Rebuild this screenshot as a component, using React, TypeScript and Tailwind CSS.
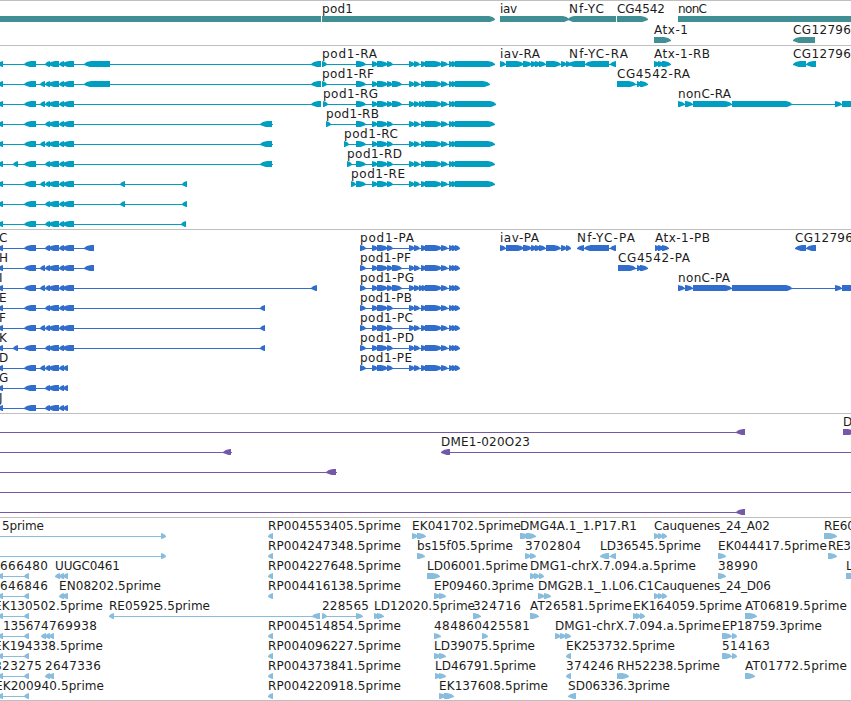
type Span = [number, number];

interface Feature {
  // label text, left edge and right edge
  label?: [string, number, number];
  dir?: "L" | "R";
  exons?: Span[];
  line?: Span;
}

interface TrackData {
  name: string;
  color: string;
  height: number;
  pitch: number;
  rows: Feature[][];
}

const WIDTH = 851;

// exons shared by the transcripts running off the left edge
const start: Span[] = [[-2, 3], [24, 36]];
const mid: Span[] = [[45, 50], [48, 59], [59, 64], [62, 74]];
const midShort: Span[] = [[45, 50], [48, 59], [59, 64], [63, 68]];
const extra: Span = [40, 45];
const k: Span = [13, 18];

const left = (exons: Span[], end?: number, label?: string): Feature => ({
  dir: "L",
  exons,
  line: end ? [-2, end] : undefined,
  label: label ? [label, -1, label === "I" ? 3 : label === "J" ? 3 : 7] : undefined,
});

const podBody: Span[] = [[372, 378], [377, 388], [387, 393]];
const podAlt: Span = [392, 402];
const podMid: Span[] = [[409, 415], [414, 420], [421, 427], [425, 442], [441, 448], [449, 454], [452, 457]];
const podMidG: Span[] = [[409, 415], [414, 420], [419, 424], [422, 427], [425, 442], [441, 448], [449, 454], [452, 457]];

const podR = (name: string, x: number, end: number, labelEnd: number, alt = false, g = false): Feature => ({
  dir: "R",
  label: [name, x, labelEnd],
  exons: [[x, x + 5], [356, 366], ...podBody, ...(alt ? [podAlt] : []), ...(g ? podMidG : podMid), [455, end]],
});

const podP = (name: string, labelEnd: number, alt = false, g = false): Feature => ({
  dir: "R",
  label: [name, 360, labelEnd],
  exons: [[360, 366], ...podBody, ...(alt ? [podAlt] : []), ...(g ? podMidG : podMid), [455, 460]],
});

const iav: Span[] = [[500, 506], [506, 524], [523, 532], [531, 537], [535, 541], [539, 546], [546, 561], [561, 567], [566, 571]];
const nonC: Span[] = [[678, 685], [685, 693], [693, 732], [732, 792], [835, 842], [842, 865]];

const right = (name: string, x: number, end: number, exons: Span[]): Feature => ({ dir: "R", label: [name, x, end], exons });
const back = (name: string, x: number, end: number, exons: Span[]): Feature => ({ dir: "L", label: [name, x, end], exons });
const rp = (id: string): Feature => back(`RP${id}.5prime`, 268, 401, [[268, 273]]);
const edge: Span[] = [[-2, 3], [24, 29]];

const tracks: TrackData[] = [
  {
    name: "genes",
    color: "#3f8f94",
    height: 45,
    pitch: 21,
    rows: [
      [
        { dir: "L", exons: [[-20, 321]] },
        right("pod1", 322, 353, [[322, 495]]),
        right("iav", 500, 517, [[500, 569]]),
        back("Nf-YC", 569, 604, [[568, 616]]),
        right("CG4542", 617, 665, [[617, 648]]),
        right("nonC", 678, 707, [[678, 870]]),
      ],
      [right("Atx-1", 654, 688, [[654, 671]]), back("CG12796", 793, 851, [[793, 815]])],
    ],
  },
  {
    name: "transcripts",
    color: "#009fc1",
    height: 184,
    pitch: 20,
    rows: [
      [
        left([...start, ...mid, [84, 110], [311, 321]]),
        podR("pod1-RA", 322, 495, 377),
        right("iav-RA", 500, 540, iav),
        back("Nf-YC-RA", 569, 628, [[568, 585], [585, 609], [610, 616]]),
        right("Atx-1-RB", 654, 710, [[654, 660], [658, 664], [662, 671]]),
        back("CG12796", 793, 851, [[793, 806], [806, 816]]),
      ],
      [
        left([...start, extra, ...mid, [84, 110], [311, 321]]),
        podR("pod1-RF", 322, 490, 374, true),
        right("CG4542-RA", 617, 690, [[617, 636], [637, 642], [640, 648]]),
      ],
      [
        left([...start, extra, ...mid, [311, 321]]),
        podR("pod1-RG", 323, 496, 378, true, true),
        right("nonC-RA", 678, 731, nonC),
      ],
      [left([...start, ...mid, [260, 272]], 273), podR("pod1-RB", 326, 495, 379)],
      [left([...start, extra, ...mid, [260, 272]], 273), podR("pod1-RC", 344, 495, 398)],
      [left([...start, k, ...mid, [260, 272]], 273), podR("pod1-RD", 347, 495, 402)],
      [left([...start, extra, ...mid, [120, 125], [182, 187]]), podR("pod1-RE", 351, 495, 405)],
      [left([...start, ...mid, [120, 125], [182, 187]])],
      [left([...start, ...mid, [181, 186]])],
    ],
  },
  {
    name: "proteins",
    color: "#316dcc",
    height: 184,
    pitch: 20,
    rows: [
      [
        left([...start, ...mid, [84, 94]], 0, "C"),
        podP("pod1-PA", 414),
        right("iav-PA", 500, 539, iav),
        back("Nf-YC-PA", 577, 635, [[577, 584], [584, 609], [610, 616]]),
        right("Atx-1-PB", 655, 710, [[655, 660], [658, 664], [662, 669]]),
        back("CG12796", 795, 853, [[795, 806], [806, 816]]),
      ],
      [
        left([...start, extra, ...mid, [84, 94]], 0, "H"),
        podP("pod1-PF", 411, true),
        right("CG4542-PA", 618, 690, [[618, 636], [637, 642], [640, 648]]),
      ],
      [
        left([...start, extra, ...mid, [311, 317]], 0, "I"),
        podP("pod1-PG", 414, true, true),
        right("nonC-PA", 678, 730, nonC),
      ],
      [left([...start, ...mid, [260, 265]], 0, "E"), podP("pod1-PB", 412)],
      [left([...start, extra, ...mid, [260, 265]], 0, "F"), podP("pod1-PC", 413)],
      [left([...start, k, ...mid, [260, 265]], 0, "K"), podP("pod1-PD", 414)],
      [left([...start, extra, ...midShort], 0, "D"), podP("pod1-PE", 412)],
      [left([...start, ...midShort], 0, "G")],
      [left([...start, ...midShort], 0, "J")],
    ],
  },
  {
    name: "clones",
    color: "#7658a8",
    height: 104,
    pitch: 20,
    rows: [
      [{ dir: "L", exons: [[736, 745]], line: [-5, 745] }, right("D", 843, 852, [[843, 855]])],
      [
        { dir: "L", exons: [[223, 231]], line: [-5, 232] },
        { dir: "L", label: ["DME1-020O23", 441, 530], exons: [[441, 450]], line: [441, 860] },
      ],
      [{ dir: "L", exons: [[326, 336]], line: [-5, 337] }],
      [{ line: [-5, 860] }],
      [{ dir: "L", exons: [[736, 745]], line: [-5, 745] }],
    ],
  },
  {
    name: "ests",
    color: "#89bddd",
    height: 183,
    pitch: 20,
    rows: [
      [
        { dir: "R", label: ["5prime", 2, 44], exons: [[161, 166]], line: [-5, 166] },
        rp("004553405"),
        right("EK041702.5prime", 412, 521, [[412, 418], [417, 426]]),
        right("DMG4A.1_1.P17.R1", 520, 637, [[520, 529], [526, 536]]),
        right("Cauquenes_24_A02", 654, 770, [[654, 659], [658, 663], [662, 667]]),
        right("RE60", 824, 855, [[824, 837]]),
      ],
      [
        { dir: "R", exons: [[161, 166]], line: [-5, 166] },
        rp("004247348"),
        right("bs15f05.5prime", 417, 513, [[417, 425]]),
        right("3702804", 525, 581, [[525, 531], [530, 536]]),
        back("LD36545.5prime", 600, 701, [[600, 609], [610, 616]]),
        right("EK044417.5prime", 718, 827, [[718, 726]]),
        right("RE3", 828, 851, [[828, 837]]),
      ],
      [
        back("666480", 0, 48, edge),
        back("UUGC0461", 55, 120, [[55, 60], [59, 64], [63, 68]]),
        rp("004227648"),
        right("LD06001.5prime", 427, 528, [[427, 440]]),
        right("DMG1-chrX.7.094.a.5prime", 530, 696, [[530, 536], [534, 540], [539, 544]]),
        right("38990", 718, 758, [[718, 726]]),
        right("L", 846, 853, [[846, 862]]),
      ],
      [
        back("646846", 0, 48, edge),
        back("EN08202.5prime", 59, 161, [[59, 64], [62, 68]]),
        rp("004416138"),
        right("EP09460.3prime", 434, 534, [[434, 441], [439, 446]]),
        right("DMG2B.1_1.L06.C1", 538, 654, [[538, 545], [544, 551]]),
        right("Cauquenes_24_D06", 654, 771, [[654, 659], [658, 663], [662, 667]]),
      ],
      [
        back("EK130502.5prime", -6, 103, edge),
        back("RE05925.5prime", 109, 210, [[109, 114], [312, 320]]),
        right("228565", 322, 369, [[322, 327], [356, 363]]),
        right("LD12020.5prime", 374, 475, [[374, 379], [377, 384]]),
        right("324716", 473, 521, [[473, 481]]),
        right("AT26581.5prime", 530, 632, [[530, 539]]),
        right("EK164059.5prime", 633, 742, [[633, 638], [636, 641], [640, 645]]),
        right("AT06819.5prime", 745, 847, [[745, 757]]),
      ],
      [
        back("13567", 3, 41, edge),
        back("4769938", 41, 97, [[41, 46], [45, 50], [49, 54]]),
        rp("004514854"),
        right("484860", 434, 482, [[434, 441]]),
        right("425581", 482, 530, [[482, 488]]),
        right("DMG1-chrX.7.094.a.5prime", 555, 721, [[555, 561], [560, 566], [565, 571]]),
        right("EP18759.3prime", 722, 822, [[722, 732], [732, 737]]),
      ],
      [
        back("EK194338.5prime", -6, 103, edge),
        rp("004096227"),
        right("LD39075.5prime", 434, 535, [[434, 441], [439, 446]]),
        back("EK253732.5prime", 566, 675, [[566, 571]]),
        right("514163", 722, 770, [[722, 732], [732, 737]]),
      ],
      [
        back("823275", -6, 42, edge),
        back("2647336", 45, 101, [[45, 50], [48, 54]]),
        rp("004373841"),
        right("LD46791.5prime", 435, 536, [[435, 441], [439, 446]]),
        back("374246", 566, 614, [[566, 571]]),
        right("RH52238.5prime", 617, 720, [[617, 622], [619, 629]]),
        right("AT01772.5prime", 745, 847, [[745, 755]]),
      ],
      [
        back("EK200940.5prime", -5, 104, edge),
        rp("004220918"),
        right("EK137608.5prime", 439, 548, [[439, 446], [444, 454]]),
        back("SD06336.3prime", 568, 670, [[568, 576]]),
      ],
    ],
  },
];

const arrow = ([a, b]: Span, dir: "L" | "R", y: number) => {
  const head = Math.min(b - a > 40 ? 6 : 7, b - a);
  // s points from the tip back to the body
  const tip = dir === "R" ? b : a;
  const tail = dir === "R" ? a : b;
  const s = dir === "R" ? -head : head;
  return `M${tail} ${y - 3}H${tip + s}L${tip + s * 0.4} ${y - 2}L${tip} ${y}V${y + 1}L${tip + s * 0.4} ${y + 2}L${tip + s * 0.8} ${y + 3}H${tail}Z`;
};

const FeatureGlyph = ({ feature, y }: { feature: Feature; y: number }) => {
  const { label, dir = "R", exons = [] } = feature;
  const xs = exons.flat();
  const line = feature.line ?? [Math.min(...xs), Math.max(...xs)];
  return (
    <g>
      <rect x={line[0]} y={y} width={line[1] - line[0]} height={1} />
      {exons.map((exon, i) => (
        <path key={i} d={arrow(exon, dir, y)} />
      ))}
      {label && (
        <text
          x={label[1]}
          y={y - 6}
          textLength={label[2] - label[1]}
          lengthAdjust="spacing"
          className="fill-[#1c1c1c] text-[12px] font-normal"
        >
          {label[0]}
        </text>
      )}
    </g>
  );
};

const Track = ({ track }: { track: TrackData }) => (
  <section className="shrink-0 overflow-hidden border-t border-[#bfbfbf]" style={{ height: track.height }}>
    <svg
      width={WIDTH}
      height={track.height - 1}
      viewBox={`0 1 ${WIDTH} ${track.height - 1}`}
      fill={track.color}
      aria-label={track.name}
      className="block"
    >
      {track.rows.map((row, r) =>
        row.map((feature, i) => <FeatureGlyph key={`${r}-${i}`} feature={feature} y={19 + r * track.pitch} />)
      )}
    </svg>
  </section>
);

const App = () => {
  return (
    <main className="flex h-[701px] w-[851px] flex-col overflow-hidden border-b border-[#bfbfbf] bg-white font-['DejaVu_Sans',sans-serif]">
      {tracks.map((track) => (
        <Track key={track.name} track={track} />
      ))}
    </main>
  );
};

export default App;
